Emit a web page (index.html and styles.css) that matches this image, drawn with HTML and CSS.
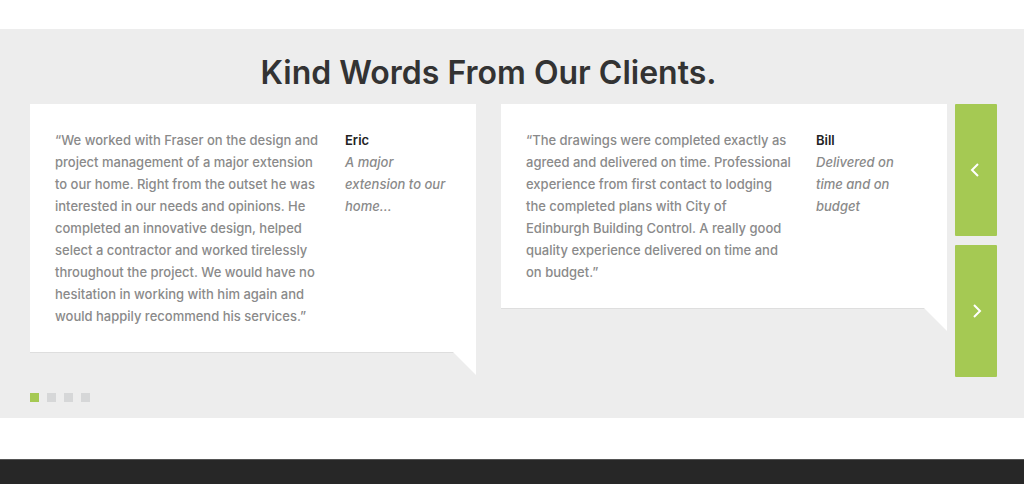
FILE: index.html
```html
<!DOCTYPE html>
<html lang="en">
<head>
<meta charset="utf-8">
<meta name="viewport" content="width=device-width, initial-scale=1">
<title>Kind Words From Our Clients</title>
<link rel="stylesheet" href="styles.css">
</head>
<body>
<main>
  <section class="testimonials">
    <h2 class="title">Kind Words From Our Clients.</h2>
    <div class="slides">
      <article class="card">
        <blockquote class="quote">“We worked with Fraser on the design and<br>project management of a major extension<br>to our home. Right from the outset he was<br>interested in our needs and opinions. He<br>completed an innovative design, helped<br>select a contractor and worked tirelessly<br>throughout the project. We would have no<br>hesitation in working with him again and<br>would happily recommend his services.”</blockquote>
        <div class="author"><strong class="name">Eric</strong><em>A major<br>extension to our<br>home...</em></div>
      </article>
      <article class="card">
        <blockquote class="quote">“The drawings were completed exactly as<br>agreed and delivered on time. Professional<br>experience from first contact to lodging<br>the completed plans with City of<br>Edinburgh Building Control. A really good<br>quality experience delivered on time and<br>on budget.”</blockquote>
        <div class="author"><strong class="name">Bill</strong><em>Delivered on<br>time and on<br>budget</em></div>
      </article>
    </div>
    <div class="arrows">
      <button class="arrow" type="button" aria-label="Previous"><svg width="14" height="16" viewBox="0 0 14 16"><path d="M9 2 3 8l6 6"/></svg></button>
      <button class="arrow" type="button" aria-label="Next"><svg width="14" height="16" viewBox="0 0 14 16"><path d="M5 2l6 6-6 6"/></svg></button>
    </div>
    <nav class="dots" aria-label="Slides">
      <button class="dot active" type="button" aria-label="Slide 1"></button>
      <button class="dot" type="button" aria-label="Slide 2"></button>
      <button class="dot" type="button" aria-label="Slide 3"></button>
      <button class="dot" type="button" aria-label="Slide 4"></button>
    </nav>
  </section>
</main>
<footer class="footer"></footer>
</body>
</html>
```
FILE: styles.css
```css
* { box-sizing: border-box; }
body {
  margin: 0;
  min-height: 100vh;
  display: flex;
  flex-direction: column;
  background: #fff;
  color: #8a8a8a;
  font: 13px/22px Inter, "Open Sans", sans-serif;
}
main { padding: 29px 0 41px; }
.testimonials {
  display: grid;
  grid-template-columns: 1fr 42px;
  column-gap: 8px;
  padding: 24px 27px 16px 30px;
  background: #ededed;
}
.title {
  margin: 0 0 11px;
  color: #333;
  font-size: 32px;
  line-height: 40px;
  font-weight: 600;
  text-align: center;
}
.slides {
  grid-row: 2;
  display: grid;
  grid-template-columns: 1fr 1fr;
  gap: 25px;
  align-items: start;
}
.card {
  position: relative;
  display: grid;
  grid-template-columns: 1fr 106px;
  gap: 25px;
  padding: 25px;
  background: #fff;
  border-bottom: 1px solid #dedede;
}
.card::after {
  content: "";
  position: absolute;
  top: calc(100% - 1px);
  right: 0;
  width: 24px;
  height: 24px;
  background: #fff;
  clip-path: polygon(0 0, 100% 0, 100% 100%);
}
.quote { margin: 0; font-weight: 500; white-space: nowrap; }
.author { font-weight: 500; white-space: nowrap; }
.name { display: block; color: #222; font-weight: 600; }
.arrows {
  grid-row: 2;
  grid-column: 2;
  display: grid;
  grid-template-rows: 132px 132px;
  gap: 9px;
}
.arrow {
  display: flex;
  align-items: center;
  justify-content: center;
  padding: 0;
  border: 0;
  border-radius: 1px;
  background: #a5c953;
  cursor: pointer;
}
.arrow svg { fill: none; stroke: #fff; stroke-width: 2; }
.dots { grid-row: 3; grid-column: 1; display: flex; gap: 8px; padding-top: 16px; }
.dot { width: 9px; height: 9px; padding: 0; border: 0; background: #d6d7d8; }
.dot.active { background: #a5c953; }
.footer { flex: 1; min-height: 25px; background: #272727; border-top: 1px solid #555; }
```
